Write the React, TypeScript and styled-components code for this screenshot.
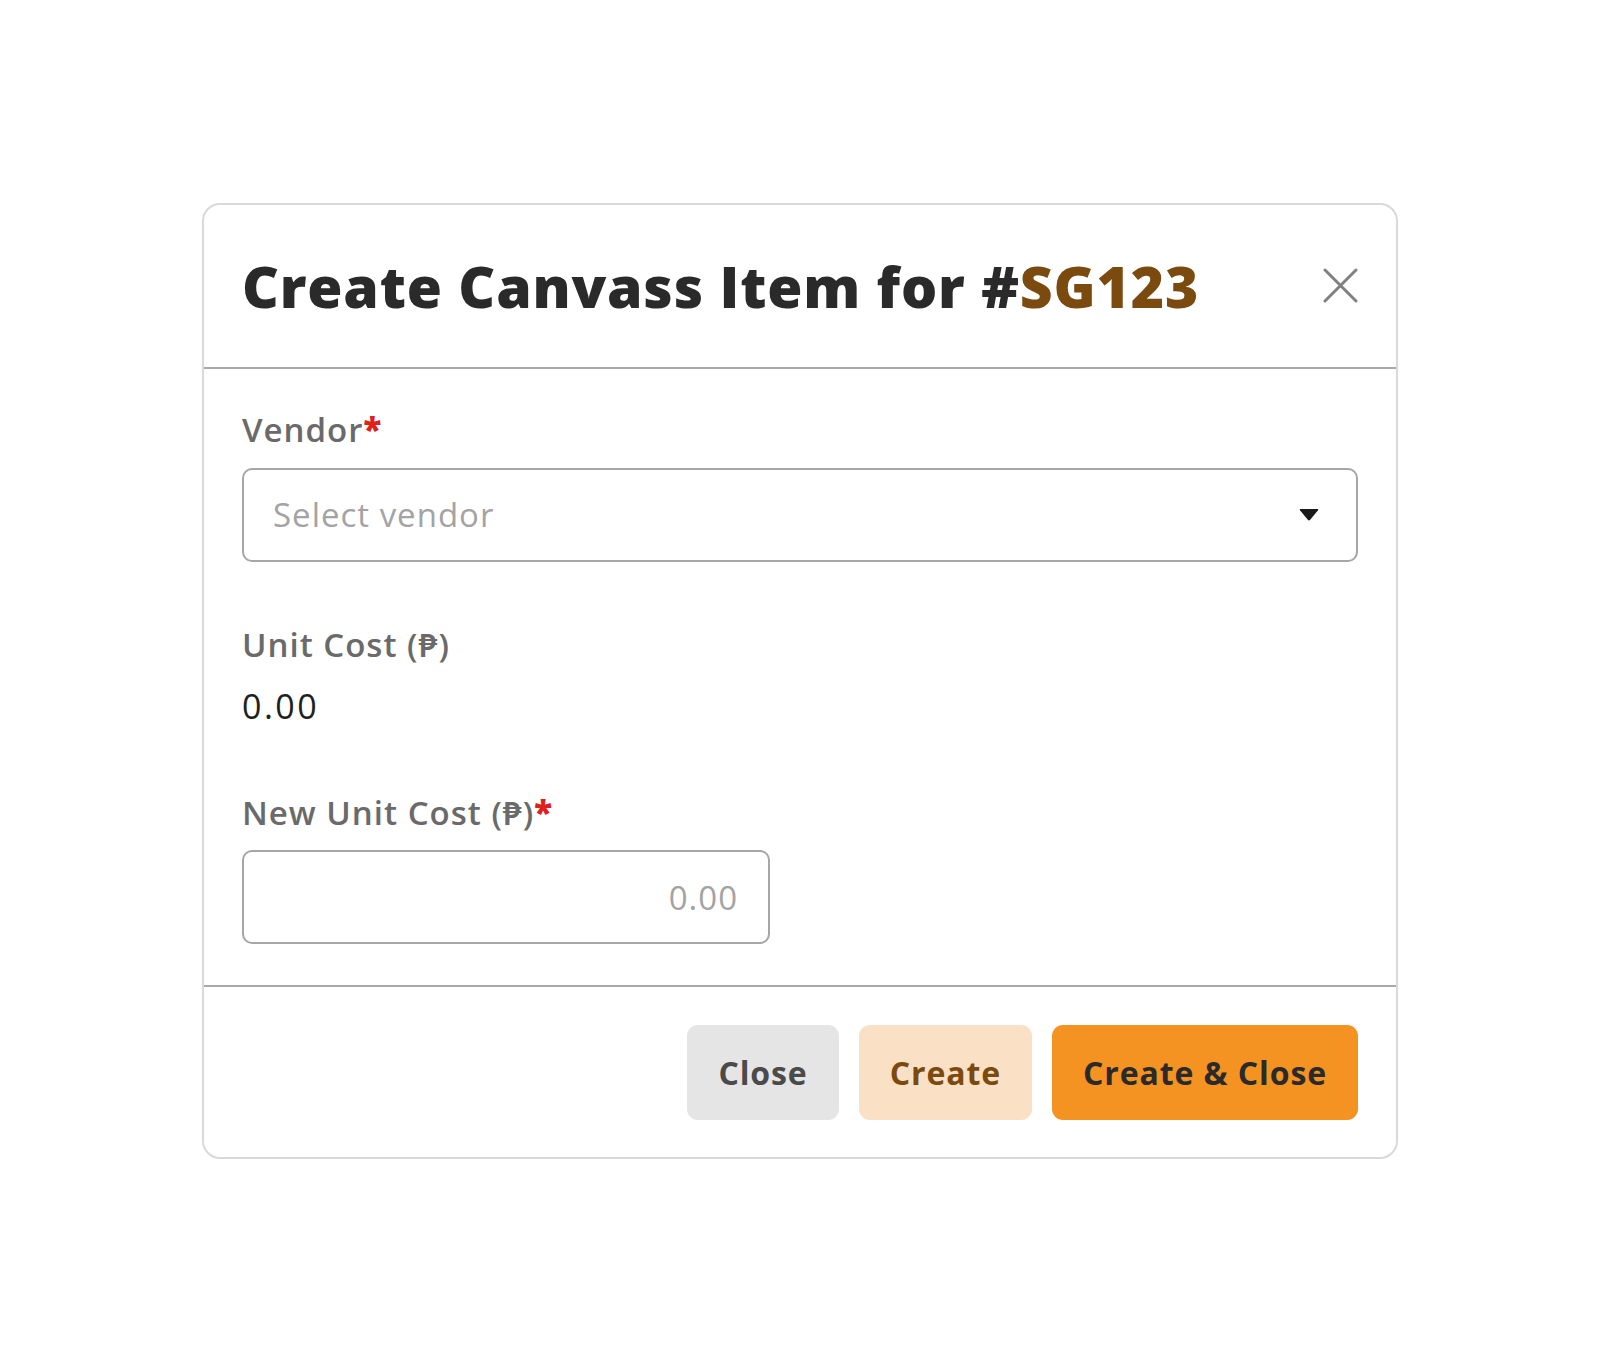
import React from 'react'
import styled, { createGlobalStyle } from 'styled-components'

const GlobalStyle = createGlobalStyle`
  * {
    box-sizing: border-box;
  }
  body {
    margin: 0;
    background: #ffffff;
    font-family: "Open Sans", "Noto Sans", "DejaVu Sans", sans-serif;
  }
`

const Page = styled.div`
  min-height: 100vh;
  display: flex;
  align-items: center;
  justify-content: center;
`

const Modal = styled.div`
  width: 1196px;
  background: #ffffff;
  border: 2px solid #d9d9d9;
  border-radius: 18px;
  display: flex;
  flex-direction: column;
`

const Header = styled.div`
  display: flex;
  align-items: center;
  justify-content: space-between;
  padding: 47px 38px 47px 38px;
  border-bottom: 2px solid #a9a9a9;
`

const Title = styled.h2`
  margin: 0;
  font-size: 57px;
  line-height: 1.2;
  font-weight: 800;
  letter-spacing: 0.8px;
  color: #2a2a2a;
`

const Code = styled.span`
  color: #7a4a0e;
`

const CloseIcon = styled.button`
  width: 36px;
  height: 36px;
  padding: 0;
  border: none;
  background: none;
  display: flex;
  align-items: center;
  justify-content: flex-end;
  cursor: pointer;
`

const Body = styled.div`
  padding: 41px 38px 41px 38px;
  display: flex;
  flex-direction: column;
  border-bottom: 2px solid #a9a9a9;
`

const Field = styled.div<{ gap?: number }>`
  display: flex;
  flex-direction: column;
  margin-bottom: ${p => p.gap ?? 0}px;
`

const Label = styled.label<{ space: number }>`
  font-size: 33px;
  line-height: 1.2;
  font-weight: 600;
  letter-spacing: 1px;
  color: #6a6a6a;
  margin-bottom: ${p => p.space}px;
`

const Required = styled.span`
  color: #e0201b;
  font-weight: 800;
`

const Select = styled.div`
  height: 94px;
  border: 2px solid #a6a6a6;
  border-radius: 10px;
  display: flex;
  align-items: center;
  justify-content: space-between;
  padding: 0 37px 0 29px;
`

const Placeholder = styled.span`
  font-size: 33px;
  font-weight: 500;
  letter-spacing: 1px;
  color: #a3a3a3;
`

const Value = styled.div`
  font-size: 34px;
  line-height: 1.2;
  font-weight: 500;
  letter-spacing: 2.5px;
  color: #1f1f1f;
`

const NumberInput = styled.div`
  width: 528px;
  height: 94px;
  border: 2px solid #a6a6a6;
  border-radius: 10px;
  display: flex;
  align-items: center;
  justify-content: flex-end;
  padding: 0 30px;
  font-size: 33px;
  font-weight: 500;
  letter-spacing: 1px;
  color: #a3a3a3;
`

const Footer = styled.div`
  display: flex;
  justify-content: flex-end;
  gap: 20px;
  padding: 38px 38px 37px 38px;
`

const Button = styled.button<{ bg: string; fg: string }>`
  height: 95px;
  padding: 0 31px;
  border: none;
  border-radius: 11px;
  background: ${p => p.bg};
  color: ${p => p.fg};
  font-family: "Open Sans", "Noto Sans", "DejaVu Sans", sans-serif;
  font-size: 32px;
  font-weight: 700;
  letter-spacing: 0.9px;
  cursor: pointer;
`

const App: React.FC = () => (
  <>
    <GlobalStyle />
    <Page>
      <Modal>
        <Header>
          <Title>
            Create Canvass Item for #<Code>SG123</Code>
          </Title>
          <CloseIcon aria-label="Close">
            <svg width="35" height="35" viewBox="0 0 35 35">
              <path d="M2 2 L33 33 M33 2 L2 33" stroke="#808080" strokeWidth="3" strokeLinecap="round" />
            </svg>
          </CloseIcon>
        </Header>
        <Body>
          <Field gap={63}>
            <Label space={18}>
              Vendor<Required>*</Required>
            </Label>
            <Select>
              <Placeholder>Select vendor</Placeholder>
              <svg width="20" height="13" viewBox="0 0 20 13">
                <path d="M1.5 1 H18.5 Q19.8 1 19 2.2 L11.2 11.8 Q10 13 8.8 11.8 L1 2.2 Q0.2 1 1.5 1 Z" fill="#1a1a1a" />
              </svg>
            </Select>
          </Field>
          <Field gap={66}>
            <Label space={22}>Unit Cost (₱)</Label>
            <Value>0.00</Value>
          </Field>
          <Field>
            <Label space={18}>
              New Unit Cost (₱)<Required>*</Required>
            </Label>
            <NumberInput>0.00</NumberInput>
          </Field>
        </Body>
        <Footer>
          <Button bg="#e5e5e5" fg="#4a4a4a">Close</Button>
          <Button bg="#fae0c5" fg="#7a4a0e">Create</Button>
          <Button bg="#f59322" fg="#2a2a2a">Create &amp; Close</Button>
        </Footer>
      </Modal>
    </Page>
  </>
)

export default App
